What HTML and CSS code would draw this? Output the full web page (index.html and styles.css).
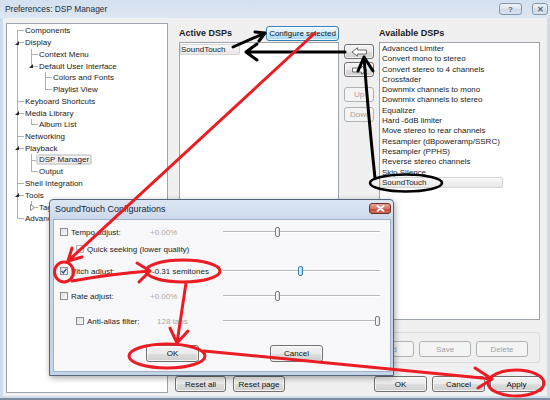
FILE: index.html
```html
<!DOCTYPE html>
<html>
<head>
<meta charset="utf-8">
<title>Preferences: DSP Manager</title>
<link rel="stylesheet" href="styles.css">
</head>
<body>
<div class="window">
  <div class="titlebar">
    <span class="title">Preferences: DSP Manager</span>
    <div class="capbtns">
      <span class="cbtn help">?</span>
      <span class="cbtn close">✕</span>
    </div>
  </div>
  <div class="client">
    <div class="tree">
      <ul>
        <li class="first"><div class="row"><span class="tw"></span><span class="lbl">Components</span></div></li>
        <li><div class="row"><span class="tw"><i class="exp"></i></span><span class="lbl">Display</span></div>
          <ul>
            <li><div class="row"><span class="tw"></span><span class="lbl">Context Menu</span></div></li>
            <li class="last"><div class="row"><span class="tw"><i class="exp"></i></span><span class="lbl">Default User Interface</span></div>
              <ul>
                <li><div class="row"><span class="tw"></span><span class="lbl">Colors and Fonts</span></div></li>
                <li class="last"><div class="row"><span class="tw"></span><span class="lbl">Playlist View</span></div></li>
              </ul>
            </li>
          </ul>
        </li>
        <li><div class="row"><span class="tw"></span><span class="lbl">Keyboard Shortcuts</span></div></li>
        <li><div class="row"><span class="tw"><i class="exp"></i></span><span class="lbl">Media Library</span></div>
          <ul>
            <li class="last"><div class="row"><span class="tw"></span><span class="lbl">Album List</span></div></li>
          </ul>
        </li>
        <li><div class="row"><span class="tw"></span><span class="lbl">Networking</span></div></li>
        <li><div class="row"><span class="tw"><i class="exp"></i></span><span class="lbl">Playback</span></div>
          <ul>
            <li><div class="row"><span class="tw"></span><span class="lbl sel">DSP Manager</span></div></li>
            <li class="last"><div class="row"><span class="tw"></span><span class="lbl">Output</span></div></li>
          </ul>
        </li>
        <li><div class="row"><span class="tw"></span><span class="lbl">Shell Integration</span></div></li>
        <li><div class="row"><span class="tw"><i class="exp"></i></span><span class="lbl">Tools</span></div>
          <ul>
            <li class="last"><div class="row"><span class="tw"><svg class="col" width="5" height="7" viewBox="0 0 5 7"><polygon points="0.5,0.5 4.5,3.5 0.5,6.5" fill="#fff" stroke="#8a8a8a" stroke-width="1"/></svg></span><span class="lbl">Tagging</span></div></li>
          </ul>
        </li>
        <li class="last"><div class="row"><span class="tw"></span><span class="lbl">Advanced</span></div></li>
      </ul>
    </div>

    <div class="right">
      <div class="dsp">
        <div class="hdr">
          <span class="heading">Active DSPs</span>
          <span class="btn hot cfg">Configure selected</span>
        </div>
        <div></div>
        <div class="hdr">
          <span class="heading">Available DSPs</span>
        </div>

        <div class="list active">
          <div class="item"><span class="sel sel-a">SoundTouch</span></div>
        </div>
        <div class="movebtns">
          <span class="btn mv mv1"><svg width="17" height="10" viewBox="0 0 17 10"><polygon points="1,5 6.5,0.8 6.5,3 15.5,3 15.5,7 6.5,7 6.5,9.2" fill="#fff" stroke="#6d6d6d" stroke-width="1" stroke-linejoin="round"/></svg></span>
          <span class="btn mv mv2"><svg width="17" height="10" viewBox="0 0 17 10"><polygon points="16,5 10.5,0.8 10.5,3 1.5,3 1.5,7 10.5,7 10.5,9.2" fill="#fff" stroke="#6d6d6d" stroke-width="1" stroke-linejoin="round"/></svg></span>
          <span class="btn mv dis up">Up</span>
          <span class="btn mv dis down">Down</span>
        </div>
        <div class="list avail">
          <div class="item">Advanced Limiter</div>
          <div class="item">Convert mono to stereo</div>
          <div class="item">Convert stereo to 4 channels</div>
          <div class="item">Crossfader</div>
          <div class="item">Downmix channels to mono</div>
          <div class="item">Downmix channels to stereo</div>
          <div class="item">Equalizer</div>
          <div class="item">Hard -6dB limiter</div>
          <div class="item">Move stereo to rear channels</div>
          <div class="item">Resampler (dBpoweramp/SSRC)</div>
          <div class="item">Resampler (PPHS)</div>
          <div class="item">Reverse stereo channels</div>
          <div class="item">Skip Silence</div>
          <div class="item"><span class="sel sel-b">SoundTouch</span></div>
        </div>
      </div>

      <div class="presets">
        <span class="btn dis pb">Load</span>
        <span class="btn dis pb">Save</span>
        <span class="btn dis pb">Delete</span>
      </div>

      <div class="bottom">
        <div class="bgroup left">
          <span class="btn b51">Reset all</span>
          <span class="btn b52">Reset page</span>
        </div>
        <div class="bgroup rightb">
          <span class="btn b53">OK</span>
          <span class="btn b53">Cancel</span>
          <span class="btn b53">Apply</span>
        </div>
      </div>
    </div>
  </div>

  <div class="dialog">
    <div class="dtitle">
      <span class="dtext">SoundTouch Configurations</span>
      <span class="dclose"><svg width="9" height="7" viewBox="0 0 9 7"><path d="M1.5,1 L7.5,6 M7.5,1 L1.5,6" stroke="#fff" stroke-width="1.8" stroke-linecap="round"/></svg></span>
    </div>
    <div class="dclient">
      <div class="drow r1">
        <div class="dlab"><span class="cbx"></span><span class="ltxt">Tempo adjust:</span></div>
        <div class="dval muted">+0.00%</div>
        <div class="slider"><span class="thumb" style="left:52px"></span></div>
      </div>
      <div class="drow r2 wide">
        <div class="dlab ind"><span class="cbx disabled"><svg width="6" height="6" viewBox="0 0 6 6"><path d="M0.6,3 L2.3,4.9 L5.4,0.8" fill="none" stroke="#9a9a9a" stroke-width="1.2"/></svg></span><span class="ltxt">Quick seeking (lower quality)</span></div>
      </div>
      <div class="drow r3">
        <div class="dlab"><span class="cbx"><svg width="6" height="6" viewBox="0 0 6 6"><path d="M0.6,3 L2.3,4.9 L5.4,0.8" fill="none" stroke="#2a4a9c" stroke-width="1.3"/></svg></span><span class="ltxt">Pitch adjust:</span></div>
        <div class="dval pitch">-0.31 semitones</div>
        <div class="slider"><span class="thumb hot" style="left:75px"></span></div>
      </div>
      <div class="drow r4">
        <div class="dlab"><span class="cbx"></span><span class="ltxt">Rate adjust:</span></div>
        <div class="dval muted">+0.00%</div>
        <div class="slider"><span class="thumb" style="left:52px"></span></div>
      </div>
      <div class="drow r5">
        <div class="dlab ind"><span class="cbx"></span><span class="ltxt">Anti-alias filter:</span></div>
        <div class="dval muted taps">128 taps</div>
        <div class="slider"><span class="thumb" style="left:152px"></span></div>
      </div>
      <div class="dbtns">
        <span class="btn b53 tall">OK</span>
        <span class="btn b53 tall">Cancel</span>
      </div>
    </div>
  </div>

  <svg class="annot" width="550" height="400" viewBox="0 0 550 400">
    <g fill="none" stroke="#000" stroke-width="3" stroke-linecap="round" stroke-linejoin="round">
      <path d="M233,47 L265,33 M255,32 L265,33 L259,41"/>
      <path d="M345,52 L246,52 M257,44 L246,52 L257,60"/>
      <path d="M375,178 Q368,112 364,57 M358,71 L364,57 L373,71"/>
      <ellipse cx="406" cy="183" rx="36" ry="8.5" stroke-width="2.6"/>
    </g>
    <g fill="none" stroke="#ec1c24" stroke-width="3" stroke-linecap="round" stroke-linejoin="round">
      <path d="M315,33 L68,261 M72,248 L68,261 L82,257"/>
      <ellipse cx="64" cy="272" rx="9.5" ry="10"/>
      <path d="M72,281 Q110,274 150,271 M137,263 L150,271 L139,282"/>
      <ellipse cx="183" cy="271" rx="37" ry="11"/>
      <path d="M186,283 L177,343 M170,328 L177,343 L188,331"/>
      <ellipse cx="167" cy="356" rx="38" ry="12"/>
      <path d="M204,351 L492,379 M475,368 L492,379 L478,388"/>
      <ellipse cx="516" cy="383" rx="28" ry="13"/>
    </g>
  </svg>
</div>
</body>
</html>
```

FILE: styles.css
```css
* { box-sizing: border-box; }
html, body { margin: 0; padding: 0; }
body {
  width: 550px;
  height: 400px;
  overflow: hidden;
  font-family: "Liberation Sans", Arial, sans-serif;
  font-size: 8px;
  color: #1b1b1b;
  background: #fff;
}

.window {
  position: relative;
  width: 550px;
  height: 400px;
  display: flex;
  flex-direction: column;
  background: linear-gradient(#d4e0ee, #dde7f2 18px, #cfdcea 18px, #cfdcea);
  border-bottom: 2px solid #7b8ba0;
}

/* title bar */
.titlebar {
  height: 18px;
  flex: none;
  display: flex;
  align-items: flex-start;
  padding-left: 5px;
}
.title {
  flex: 1;
  font-size: 8.4px;
  line-height: 18px;
  color: #1f2c3b;
}
.capbtns {
  display: flex;
  gap: 10px;
  margin-top: 3px;
  margin-right: 2px;
}
.cbtn {
  height: 12px;
  border: 1px solid #8797ab;
  border-radius: 3px;
  background: linear-gradient(#eef3f8, #dbe4ee 50%, #cfdae7 51%, #d8e2ed);
  display: flex;
  align-items: center;
  justify-content: center;
  color: #5a6676;
  font-size: 8px;
  font-weight: bold;
}
.cbtn.help { width: 23px; }
.cbtn.close { width: 16px; }

/* client */
.client {
  flex: 1;
  margin: 0 3px 2px 3px;
  background: #f0f0f0;
  display: flex;
  gap: 7px;
  padding: 5px 0 3px 3px;
}

/* tree */
.tree {
  width: 162px;
  height: 370px;
  flex: none;
  border: 1px solid #9ea4ad;
  background: #fff;
  overflow: hidden;
}
.tree ul {
  list-style: none;
  margin: 0;
  padding: 0 0 0 14px;
}
.tree > ul { padding: 1px 0 0 7px; }
.tree li {
  background: linear-gradient(#b0b0b0, #b0b0b0) 3px 0 / 1px 100% no-repeat;
}
.tree li.last { background-size: 1px 6px; }
.tree li.first { background-position: 3px 6px; }
.row {
  display: flex;
  align-items: center;
  height: 11.75px;
  white-space: nowrap;
  background: linear-gradient(#b0b0b0, #b0b0b0) 3px 50% / 7px 1px no-repeat;
}
.tw {
  width: 11px;
  flex: none;
  display: flex;
  align-items: center;
}
.exp {
  display: block;
  width: 0;
  height: 0;
  margin-left: 1px;
  border-left: 4px solid transparent;
  border-bottom: 4px solid #2a2a2a;
}
.col { display: block; margin-left: 2px; }
.lbl { color: #1b1b1b; line-height: 11px; }
.lbl.sel {
  margin-left: -3px;
  padding: 0 2px;
  border: 1px solid #d9d9d9;
  border-radius: 2px;
  background: linear-gradient(#fbfbfb, #e9e9e9);
  line-height: 9px;
}

/* right side */
.right {
  width: 372px;
  flex: none;
  display: flex;
  flex-direction: column;
}
.dsp {
  display: grid;
  grid-template-columns: 160px 30px 161px;
  grid-template-rows: 19px 278px;
  column-gap: 5px;
  margin-left: 4px;
}
.hdr {
  display: flex;
  align-items: flex-end;
  justify-content: space-between;
}
.heading {
  font-weight: bold;
  font-size: 9px;
  line-height: 11px;
  margin-bottom: 3px;
  color: #1b1b1b;
}

.btn {
  display: flex;
  align-items: center;
  justify-content: center;
  height: 16px;
  border: 1px solid #707070;
  border-radius: 3px;
  background: linear-gradient(#f3f3f3, #ebebeb 50%, #dddddd 51%, #cfcfcf);
  box-shadow: inset 0 0 0 1px rgba(255,255,255,0.75);
  color: #111;
  white-space: nowrap;
  overflow: hidden;
  flex: none;
}
.btn.hot {
  border-color: #3c7fb1;
  background: linear-gradient(#eaf6fd, #d9f0fc 50%, #bee6fd 51%, #a7d9f5);
}
.btn.dis {
  border-color: #adb2b5;
  background: #f4f4f4;
  box-shadow: none;
  color: #a3a3a3;
}
.cfg {
  width: 73px;
  height: 15px;
  margin-bottom: 1px;
}

.list {
  border: 1px solid #9ea4ad;
  background: #fff;
  padding-top: 1px;
  line-height: 10.3px;
  overflow: hidden;
  white-space: nowrap;
}
.list .item { height: 10.3px; padding-left: 2px; }
.list.active .item { padding-left: 0; }
.sel {
  display: inline-block;
  height: 11px;
  margin-top: -0.5px;
  line-height: 11px;
  border-radius: 2px;
  background: linear-gradient(#fafafa, #e6e6e6);
  box-shadow: inset 0 0 0 1px #d6d6d6;
}
.sel-a { width: 60px; padding-left: 1px; }
.sel-b { width: 123px; margin-left: -2px; padding-left: 2px; }

.movebtns {
  display: flex;
  flex-direction: column;
}
.mv { width: 30px; height: 15px; }
.mv1 { margin-top: 2px; }
.mv2 { margin-top: 3px; }
.mv.up { margin-top: 10px; }
.mv.down { margin-top: 5px; justify-content: flex-start; padding-left: 5px; }

.presets {
  margin: 12px 0 0 4px;
  width: 361px;
  height: 31px;
  border: 1px solid #d5dbe0;
  border-radius: 3px;
  display: flex;
  justify-content: flex-end;
  gap: 5px;
  padding: 8px 11px 0 0;
}
.pb { width: 52px; }

.bottom {
  margin-top: 13px;
  display: flex;
  justify-content: space-between;
  padding-right: 4px;
}
.bgroup { display: flex; }
.bgroup.left { gap: 7px; }
.bgroup.rightb { gap: 5px; }
.b51 { width: 51px; }
.b52 { width: 52px; }
.b53 { width: 53px; }

/* dialog */
.dialog {
  position: absolute;
  left: 49px;
  top: 199px;
  width: 345px;
  height: 177px;
  border: 1px solid #56667a;
  border-radius: 4px 4px 0 0;
  background: linear-gradient(#dde7f3, #ccdaeb 19px, #c7d6e9 19px, #c4d4e8);
  box-shadow: 1px 2px 6px rgba(0, 0, 0, 0.35);
  display: flex;
  flex-direction: column;
}
.dtitle {
  height: 19px;
  flex: none;
  display: flex;
  align-items: flex-start;
  padding-left: 5px;
}
.dtext {
  flex: 1;
  font-size: 9px;
  line-height: 19px;
  color: #1b2634;
}
.dclose {
  width: 22px;
  height: 11px;
  margin: 3px 2px 0 0;
  border: 1px solid #6e2d26;
  border-radius: 3px;
  background: linear-gradient(#e3a59b, #d2776a 50%, #c24b3b 51%, #d06a55);
  display: flex;
  align-items: center;
  justify-content: center;
}
.dclose svg { display: block; }
.dclient {
  flex: 1;
  margin: 0 2px 3px 3px;
  border: 1px solid #9fb3cb;
  background: #f8f8fa;
  padding: 6px 0 0 6px;
  display: flex;
  flex-direction: column;
}
.drow {
  display: grid;
  grid-template-columns: 90px 73px 157px;
  height: 12px;
  align-items: center;
  white-space: nowrap;
}
.drow.wide { grid-template-columns: 1fr; }
.r2 { margin-top: 5px; }
.r3 { margin-top: 10px; }
.r4 { margin-top: 13px; }
.r5 { margin-top: 13px; }
.dlab {
  display: flex;
  align-items: center;
  color: #222;
}
.dlab.ind { padding-left: 16px; }
.cbx {
  width: 8px;
  height: 8px;
  flex: none;
  border: 1px solid #8e8f8f;
  background: linear-gradient(135deg, #dedede, #fbfbfb);
  display: flex;
  align-items: center;
  justify-content: center;
}
.cbx svg { display: block; }
.cbx.disabled { border-color: #b9b9b9; background: #f2f2f2; }
.ltxt { margin-left: 3px; }
.dval { color: #1b1b1b; }
.dval.muted { color: #a8a8a8; }
.dval.pitch { padding-left: 2px; }
.dval.taps { padding-left: 7px; }
.slider {
  position: relative;
  height: 12px;
  background:
    linear-gradient(#b9b9b9, #b9b9b9) 0 5px / 100% 1px no-repeat,
    linear-gradient(#ffffff, #ffffff) 0 6px / 100% 1px no-repeat;
}
.thumb {
  position: absolute;
  top: 1px;
  width: 5px;
  height: 10px;
  border: 1px solid #7d7d7d;
  border-radius: 2px;
  background: linear-gradient(90deg, #ffffff, #e2e2e2);
}
.thumb.hot {
  border-color: #3c7fb1;
  background: linear-gradient(90deg, #e8f5fc, #a9d9f4);
}
.dbtns {
  display: flex;
  gap: 71px;
  padding-left: 86px;
  margin-top: 18px;
}
.btn.tall { height: 17px; }

/* annotations */
.annot {
  position: absolute;
  left: 0;
  top: 0;
  pointer-events: none;
}
```
